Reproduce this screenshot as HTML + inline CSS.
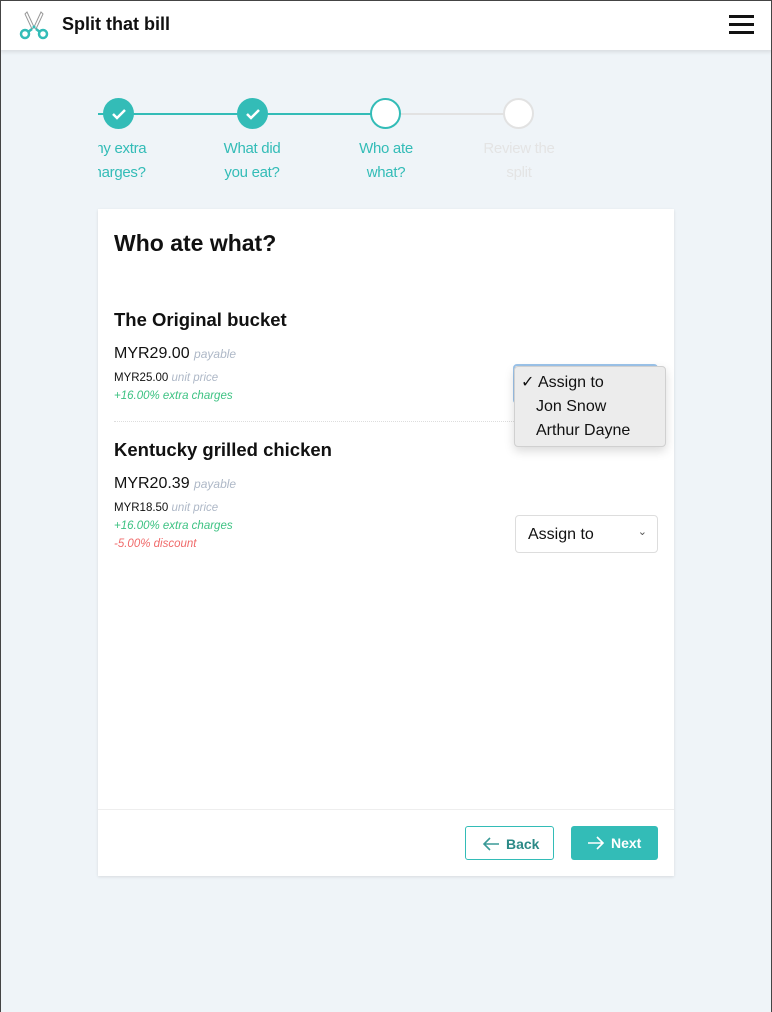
<!DOCTYPE html>
<html><head><style>
*{box-sizing:border-box;margin:0;padding:0}
body{width:772px;height:1012px;background:#eff4f8;font-family:"Liberation Sans",sans-serif;position:relative;overflow:hidden}
.frame{position:absolute;left:0;top:0;width:772px;height:1012px;border:1px solid #444;border-bottom:none;pointer-events:none;z-index:10}
.hdr{position:absolute;left:0;top:0;width:772px;height:50px;background:#fff;box-shadow:0 2px 4px rgba(0,0,0,.1)}
.abs{position:absolute}
.lbl{position:absolute;font-size:15px;text-align:center;width:100px;line-height:24px;color:#33bcb7;letter-spacing:-0.3px}
.card{position:absolute;left:98px;top:209px;width:576px;height:667px;background:#fff;box-shadow:0 1px 3px rgba(0,0,0,.1)}
.t{position:absolute;left:16px;font-weight:bold;color:#111}
.s{position:absolute;left:16px;font-size:11.5px;color:#111}
.g{color:#aeb8c7;font-style:italic}
</style></head><body>
<div class="frame"></div>
<div class="hdr">
<svg class="abs" style="left:16px;top:10px" width="36" height="30" viewBox="0 0 36 30">
<path d="M11 2 L18 17 L16 19 L9 4 Z M25 2 L18 17 L20 19 L27 4 Z" stroke="#999" stroke-width="1" fill="#fff"/>
<circle cx="18" cy="17" r="1.5" fill="#33bcb7"/>
<circle cx="9" cy="24" r="4" stroke="#33bcb7" stroke-width="2.5" fill="none"/>
<circle cx="27" cy="24" r="4" stroke="#33bcb7" stroke-width="2.5" fill="none"/>
<path d="M12 22 L16 19 M24 22 L20 19" stroke="#33bcb7" stroke-width="2.5"/>
</svg>
<div class="abs" style="left:62px;top:14px;font-size:18px;font-weight:bold;color:#111">Split that bill</div>
<div class="abs" style="left:729px;top:15px;width:25px;height:3px;background:#111;box-shadow:0 8px 0 #111,0 16px 0 #111"></div>
</div>
<div class="abs" style="left:98px;top:113px;width:288px;height:2px;background:#33bcb7"></div>
<div class="abs" style="left:386px;top:113px;width:133px;height:2px;background:#e2e2e2"></div>
<div class="abs" style="left:103px;top:98px;width:31px;height:31px;border-radius:50%;background:#33bcb7"></div>
<div class="abs" style="left:237px;top:98px;width:31px;height:31px;border-radius:50%;background:#33bcb7"></div>
<svg class="abs" style="left:103px;top:98px" width="31" height="31"><path d="M10 16 l4 4 l8 -8" stroke="#fff" stroke-width="2.5" fill="none"/></svg>
<svg class="abs" style="left:237px;top:98px" width="31" height="31"><path d="M10 16 l4 4 l8 -8" stroke="#fff" stroke-width="2.5" fill="none"/></svg>
<div class="abs" style="left:370px;top:98px;width:31px;height:31px;border-radius:50%;background:#fff;border:2px solid #33bcb7"></div>
<div class="abs" style="left:503px;top:98px;width:31px;height:31px;border-radius:50%;background:#fff;border:2px solid #e2e2e2"></div>
<div class="abs" style="left:98px;top:137px;width:70px;height:54px;overflow:hidden"><div class="lbl" style="left:-32px;top:0">Any extra<br>charges?</div></div>
<div class="lbl" style="left:202px;top:137px">What did<br>you eat?</div>
<div class="lbl" style="left:336px;top:137px">Who ate<br>what?</div>
<div class="lbl" style="left:469px;top:137px;color:#e4e4e4">Review the<br>split</div>
<div class="card">
<div class="t" style="top:21px;font-size:23px">Who ate what?</div>
<div class="t" style="top:100px;font-size:18.5px">The Original bucket</div>
<div class="s" style="top:136px;font-size:16px">MYR29.00 <span class="g" style="font-size:12px">payable</span></div>
<div class="s" style="top:163px">MYR25.00 <span class="g">unit price</span></div>
<div class="s" style="top:181px;color:#3cc282;font-style:italic">+16.00% extra charges</div>
<div class="abs" style="left:16px;top:212px;width:542px;border-top:1px dotted #ddd"></div>
<div class="t" style="top:230px;font-size:18.5px">Kentucky grilled chicken</div>
<div class="s" style="top:266px;font-size:16px">MYR20.39 <span class="g" style="font-size:12px">payable</span></div>
<div class="s" style="top:293px">MYR18.50 <span class="g">unit price</span></div>
<div class="s" style="top:311px;color:#3cc282;font-style:italic">+16.00% extra charges</div>
<div class="s" style="top:329px;color:#f06b6b;font-style:italic">-5.00% discount</div>
<div class="abs" style="left:417px;top:306px;width:143px;height:38px;border:1px solid #ddd;border-radius:4px;font-size:16px;padding:10px 12px;color:#111">Assign to<span style="position:absolute;right:10px;top:9px;font-size:11px;color:#555">&#8964;</span></div>
<div class="abs" style="left:0;top:600px;width:576px;border-top:1px solid #eee"></div>
<div class="abs" style="left:367px;top:617px;width:89px;height:34px;border:1px solid #33bcb7;border-radius:3px;color:#2c8a87;font-weight:bold;font-size:14px;padding-top:9px;padding-left:40px">Back
<svg class="abs" style="left:16px;top:9px" width="18" height="16"><path d="M17 8H2 M8 2 L2 8 L8 14" stroke="#3a9a97" stroke-width="1.6" fill="none"/></svg></div>
<div class="abs" style="left:473px;top:617px;width:87px;height:34px;background:#33bcb7;border-radius:3px;color:#fff;font-weight:bold;font-size:14px;padding-top:9px;padding-left:40px">Next
<svg class="abs" style="left:16px;top:9px" width="18" height="16"><path d="M1 8H16 M10 2 L16 8 L10 14" stroke="#fff" stroke-width="1.6" fill="none"/></svg></div>
</div>
<div class="abs" style="left:513px;top:364px;width:145px;height:40px;border:2px solid #9cc4ea;border-radius:4px;background:#fff"></div>
<div class="abs" style="left:514px;top:366px;width:152px;height:81px;background:#ececec;border:1px solid #d0d0d0;border-radius:4px;box-shadow:0 4px 10px rgba(0,0,0,.15);font-size:16px;color:#111;line-height:24px;padding-top:4px">
<div style="padding-left:6px">✓ Assign to</div>
<div style="padding-left:21px">Jon Snow</div>
<div style="padding-left:21px">Arthur Dayne</div>
</div>
</body></html>
